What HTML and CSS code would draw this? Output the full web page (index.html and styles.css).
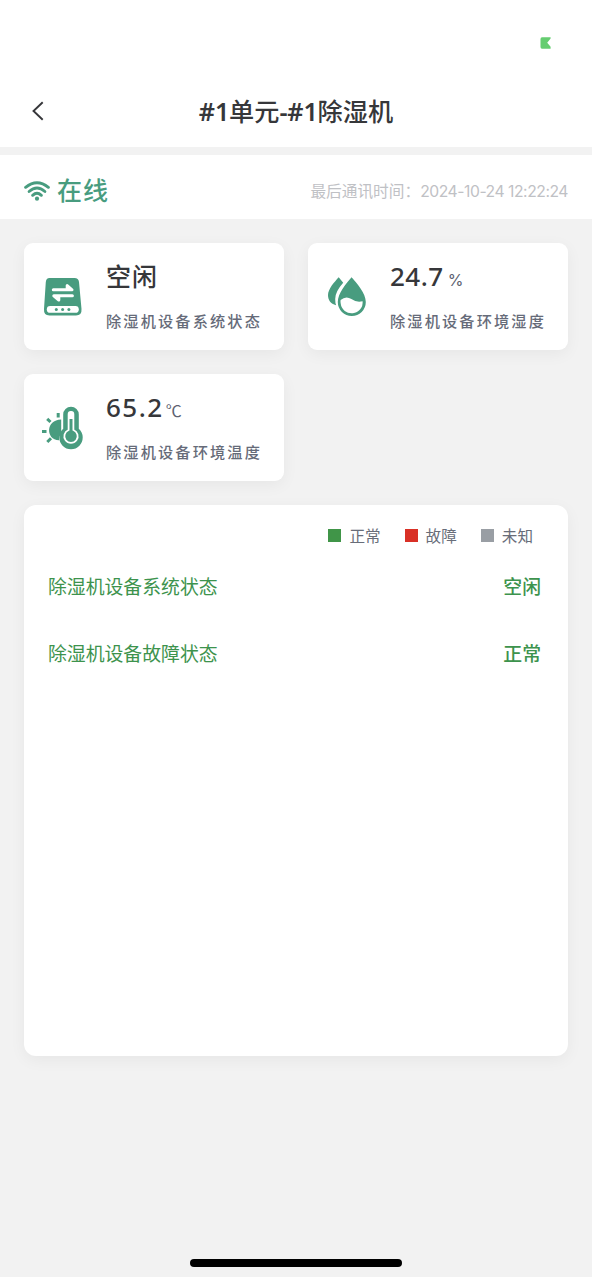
FILE: index.html
```html
<!DOCTYPE html>
<html lang="zh-CN">
<head>
<meta charset="utf-8">
<title>#1单元-#1除湿机</title>
<link rel="stylesheet" href="styles.css">
</head>
<body>
<div class="screen">
  <div class="statusbar">
    <svg class="battery" width="12" height="12" viewBox="0 0 12 12"><path d="M2 0.3H10.6V1.5L7.2 5.8L10.6 9.8V11.7H2Q.5 11.7 .5 10V2Q.5 .3 2 .3Z" fill="#65cd70"/></svg>
  </div>
  <header class="nav">
    <svg class="back" width="12" height="20" viewBox="0 0 12 20"><path d="M10.7 1.2L1.5 10L10.7 18.8" fill="none" stroke="#36373a" stroke-width="1.9"/></svg>
    <h1 class="title"><span class="lat">#1</span>单元<span class="lat">-#1</span>除湿机</h1>
  </header>
  <section class="online">
    <svg class="wifi" width="26" height="20" viewBox="0 0 26 20"><g fill="none" stroke="#489c7f" stroke-width="2.9" stroke-linecap="round"><path d="M1.6 6.3Q13-3 24.4 6.3"/><path d="M5.1 10.5Q13 3.7 20.9 10.5"/><path d="M8.6 14.3Q13 10.4 17.4 14.3"/></g><circle cx="13" cy="17.7" r="2.1" fill="#489c7f"/></svg>
    <span class="state">在线</span>
    <span class="time"><span class="time-label">最后通讯时间：</span><span class="time-value">2024-10-24 12:22:24</span></span>
  </section>
  <main class="content">
    <div class="cards">
      <article class="card">
        <svg class="icon" width="42" height="44" viewBox="0 0 42 44"><path d="M7.5 3H32.5Q36.5 3 37 7L39.5 34Q40 40.5 34 40.5H7.5Q1.5 40.5 2 34L3.8 7Q4.2 3 7.5 3Z" fill="#489c7f"/><rect x="4.8" y="31" width="32" height="6.8" rx="3.4" fill="#fff"/><g fill="#489c7f"><circle cx="14.3" cy="34.5" r="1.5"/><circle cx="20.6" cy="34.5" r="1.5"/><circle cx="26.9" cy="34.5" r="1.5"/></g><path d="M11.3 14.8H30L25.2 10.6V14.8M30.4 20.8H11.8L16.8 25V20.8" fill="#fff" stroke="#fff" stroke-width="3" stroke-linecap="round" stroke-linejoin="round"/></svg>
        <div class="info"><div class="value zh">空闲</div><div class="label">除湿机设备系统状态</div></div>
      </article>
      <article class="card">
        <svg class="icon" width="42" height="44" viewBox="0 0 42 44"><path d="M12.7 2.2L17.2 7.8Q9 17 9.2 24Q9.2 28 10.1 30.2C4.5 29 2 25 2 20C2 14 8.5 6.8 12.7 2.2Z" fill="#489c7f"/><path d="M25.6 2.2C31 8.5 39.8 18 39.8 27A14 14 0 0 1 11.8 27C11.8 18 20.2 8.5 25.6 2.2Z" fill="#489c7f"/><path d="M14.6 25Q20 20.4 25.4 24.1T36.6 26.2A10.9 10.9 0 0 1 14.7 28.5Q14.3 26.5 14.6 25Z" fill="#fff"/></svg>
        <div class="info"><div class="value humidity">24.7<small>%</small></div><div class="label">除湿机设备环境湿度</div></div>
      </article>
      <article class="card">
        <svg class="icon" width="42" height="44" viewBox="0 0 42 44"><g fill="none" stroke="#489c7f" stroke-width="3"><path d="M16.2 7V11.5M5.2 12.8L8.5 16M0 25.5H4.5M5.3 36L9 32.3"/></g><path d="M19.2 13.5C3.5 13.5 3.5 34 17 34.2Q16.5 30.5 19.2 27.4Z" fill="#489c7f"/><path d="M21.2 8.6A7.8 7.8 0 0 1 36.8 8.6V22.8A11.7 11.7 0 1 1 21.2 22.8Z" fill="#489c7f"/><path d="M26.6 24V8.2A2.4 2.4 0 0 1 31.4 8.2V24A6.7 6.7 0 1 1 26.6 24Z" fill="none" stroke="#fff" stroke-width="1.8"/><path d="M26.5 8A2.5 2.5 0 0 1 31.5 8V13H26.5Z" fill="#fff"/><circle cx="29" cy="30.4" r="4.5" fill="#489c7f"/></svg>
        <div class="info"><div class="value">65.2<small class="deg">℃</small></div><div class="label">除湿机设备环境温度</div></div>
      </article>
    </div>
    <section class="panel">
      <div class="legend">
        <span class="key"><i class="dot ok"></i>正常</span>
        <span class="key"><i class="dot bad"></i>故障</span>
        <span class="key"><i class="dot none"></i>未知</span>
      </div>
      <div class="row"><span>除湿机设备系统状态</span><b>空闲</b></div>
      <div class="row"><span>除湿机设备故障状态</span><b>正常</b></div>
    </section>
  </main>
  <footer class="home"><div class="bar"></div></footer>
</div>
</body>
</html>
```
FILE: styles.css
```css
* { box-sizing: border-box; }
body { margin: 0; background: #fff; font-family: "Noto Sans CJK SC", sans-serif; }
.screen { width: 592px; height: 1277px; background: #f2f2f2; display: flex; flex-direction: column; }
.statusbar { height: 76px; background: #fff; display: flex; justify-content: flex-end; padding: 37px 40px 0 0; }
.nav { height: 71px; background: #fff; display: grid; grid-template-columns: 66px 1fr 66px; align-items: center; padding-bottom: 2px; }
.back { margin-left: 32px; }
.title { margin: 0; text-align: center; font-size: 25.2px; line-height: 36px; font-weight: 500; color: #36373a; white-space: nowrap; }
.lat { font-family: "Noto Sans", sans-serif; font-weight: 600; letter-spacing: -.2px; }
.online { margin-top: 8px; height: 64px; background: #fff; display: flex; align-items: center; padding: 8px 24px 0; color: #489c7f; }
.wifi { margin-right: 7px; }
.state { font-size: 25px; line-height: 36px; font-weight: 500; letter-spacing: 1px; padding-bottom: 5px; }
.time { margin-left: auto; display: flex; align-items: center; font-size: 15.7px; line-height: 24px; font-weight: 400; color: #bfc1c5; white-space: nowrap; }
.time-value { font-family: Inter, sans-serif; font-weight: 400; font-size: 15.7px; letter-spacing: -.46px; padding-top: 1px; }
.content { padding: 24px; flex: 1; }
.cards { display: grid; grid-template-columns: 260px 260px; gap: 24px; }
.card { height: 107px; background: #fff; border-radius: 9px; display: flex; box-shadow: 0 4px 16px rgba(0,0,0,.05); }
.icon { margin: 32px 22px 0 18px; flex: none; }
.info { padding-top: 14px; }
.value { height: 36px; line-height: 38px; font-family: "Noto Sans", "Noto Sans CJK SC", sans-serif; font-size: 26px; font-weight: 500; letter-spacing: 1.5px; color: #36373a; white-space: nowrap; }
.humidity { letter-spacing: .5px; }
.zh { font-family: "Noto Sans CJK SC", sans-serif; font-size: 25px; letter-spacing: 1px; line-height: 36px; }
.value small { font-family: Inter, "Noto Sans CJK SC", sans-serif; font-size: 16px; font-weight: 400; color: #5d6270; margin-left: 4px; letter-spacing: 0; }
.value .deg { font-family: "Noto Sans CJK SC", sans-serif; margin-left: 2px; }
.label { margin-top: 15px; font-size: 15.2px; line-height: 24px; font-weight: 500; letter-spacing: 2.15px; color: #666b79; white-space: nowrap; }
.panel { margin-top: 24px; height: 551px; background: #fff; border-radius: 12px; padding: 18px 27px 0 24px; box-shadow: 0 4px 16px rgba(0,0,0,.05); }
.legend { display: flex; justify-content: flex-end; gap: 24px; padding-right: 8px; font-size: 15.6px; line-height: 24px; color: #686d79; }
.key { display: flex; align-items: center; gap: 8px; }
.dot { width: 13px; height: 13px; margin-top: 1px; }
.ok { background: #409548; }
.bad { background: #d93026; }
.none { background: #999ea4; }
.row { display: flex; justify-content: space-between; align-items: center; height: 67px; font-size: 18.85px; color: #3d934d; }
.legend + .row { margin-top: 5px; }
.row b { font-weight: 500; }
.home { height: 18px; display: flex; justify-content: center; }
.bar { width: 212px; height: 8px; border-radius: 4px; background: #000; }
```
